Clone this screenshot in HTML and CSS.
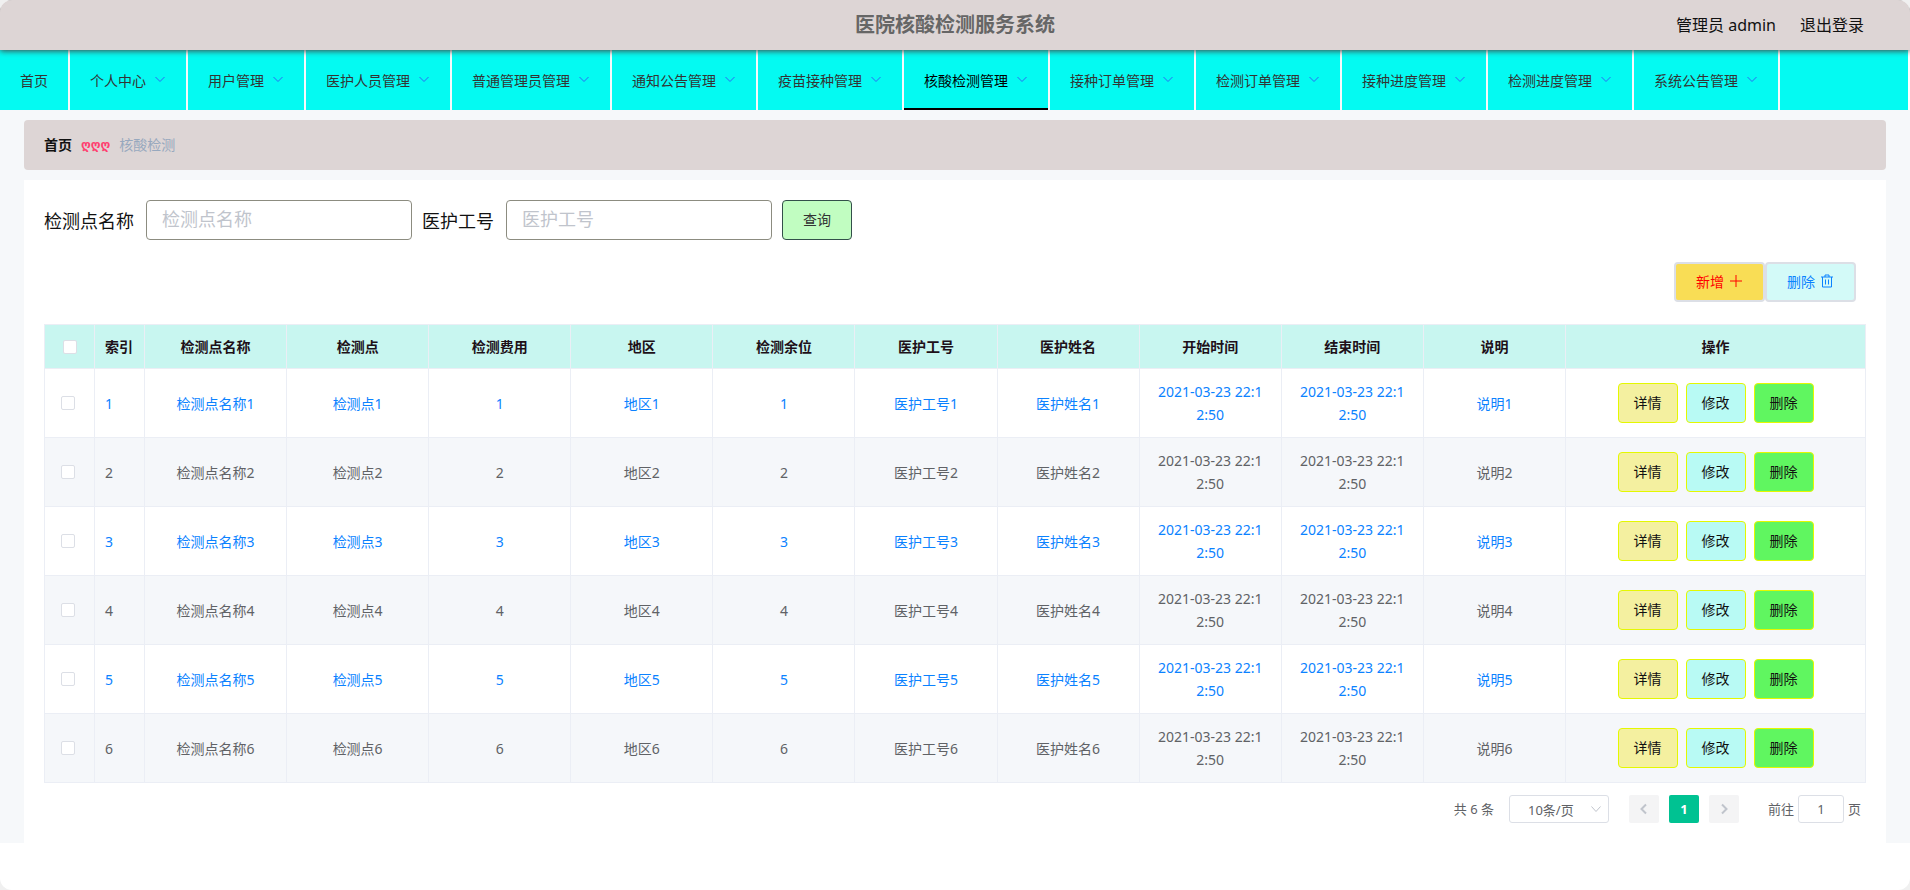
FILE: index.html
```html
<!DOCTYPE html>
<html lang="zh-CN">
<head>
<meta charset="utf-8">
<title>医院核酸检测服务系统</title>
<link rel="stylesheet" href="styles.css">
</head>
<body>
<div class="app">
  <header class="topbar">
    <h1 class="title">医院核酸检测服务系统</h1>
    <div class="account">
      <span>管理员 admin</span>
      <a class="logout" href="#logout">退出登录</a>
    </div>
  </header>
  <nav class="menu" id="menu">
    <a class="menu-item" href="#home">首页</a>
  </nav>
  <main class="main">
    <div class="crumbs">
      <a class="crumb-home" href="#home">首页</a>
      <span class="crumb-sep">ღღღ</span>
      <span class="crumb-current">核酸检测</span>
    </div>
    <section class="panel">
      <form class="search">
        <label class="search-label" for="site">检测点名称</label>
        <input class="search-input" id="site" type="text" placeholder="检测点名称">
        <label class="search-label" for="staff">医护工号</label>
        <input class="search-input" id="staff" type="text" placeholder="医护工号">
        <button class="query" type="button">查询</button>
      </form>
      <div class="tools">
        <button class="tool tool-add" type="button">新增
          <svg class="icon" viewBox="0 0 14 14"><path d="M7 1v12M1 7h12"/></svg>
        </button>
        <button class="tool tool-del" type="button">删除
          <svg class="icon" viewBox="0 0 14 14"><path d="M1 3h12M5 3V1h4v2M2.500 3v10h9V3M5.500 5.500v5M8.500 5.500v5"/></svg>
        </button>
      </div>
      <table class="grid">
        <colgroup>
          <col class="c-small"><col class="c-small">
          <col><col><col><col><col><col><col><col><col><col>
          <col class="c-ops">
        </colgroup>
        <thead>
          <tr>
            <th><input class="check" type="checkbox" aria-label="全选"></th>
            <th class="index">索引</th>
            <th>检测点名称</th><th>检测点</th><th>检测费用</th><th>地区</th><th>检测余位</th>
            <th>医护工号</th><th>医护姓名</th><th>开始时间</th><th>结束时间</th><th>说明</th><th>操作</th>
          </tr>
        </thead>
        <tbody id="rows"></tbody>
      </table>
      <div class="pager">
        <span class="total">共 6 条</span>
        <span class="size">
          <select class="size-select" aria-label="每页条数"><option>10条/页</option></select>
          <svg class="size-arrow" viewBox="0 0 12 12"><path d="M1.500 3.500 6 8.500l4.500-5"/></svg>
        </span>
        <button class="page" type="button" aria-label="上一页" disabled><svg class="page-icon" viewBox="0 0 12 12"><path d="M8 1.500 3.500 6 8 10.500"/></svg></button>
        <button class="page page-on" type="button">1</button>
        <button class="page" type="button" aria-label="下一页" disabled><svg class="page-icon" viewBox="0 0 12 12"><path d="M4 1.500 8.500 6 4 10.500"/></svg></button>
        <label class="jump">前往<input class="jump-input" type="text" value="1">页</label>
      </div>
    </section>
  </main>
</div>
<script src="app.js"></script>
</body>
</html>
```

FILE: app.js
```js
const menus = ['个人中心', '用户管理', '医护人员管理', '普通管理员管理', '通知公告管理', '疫苗接种管理',
  '核酸检测管理', '接种订单管理', '检测订单管理', '接种进度管理', '检测进度管理', '系统公告管理'];
const menu = document.getElementById('menu');
for (const name of menus) {
  const on = name === '核酸检测管理' ? ' menu-on' : '';
  menu.insertAdjacentHTML('beforeend',
    `<a class="menu-item${on}" href="#menu">${name}<svg class="menu-arrow" viewBox="0 0 12 12"><path d="M1.5 3 6 7.5 10.500 3"/></svg></a>`);
}

const time = '2021-03-23 22:12:50';
const rows = document.getElementById('rows');
for (let i = 1; i <= 6; i++) {
  const cells = [`检测点名称${i}`, `检测点${i}`, i, `地区${i}`, i, `医护工号${i}`, `医护姓名${i}`];
  rows.insertAdjacentHTML('beforeend', `<tr>
    <td class="pick"><input class="check" type="checkbox" aria-label="选择第${i}行"></td>
    <td class="index">${i}</td>
    ${cells.map(c => `<td>${c}</td>`).join('')}
    <td class="time">${time}</td><td class="time">${time}</td><td>说明${i}</td>
    <td><div class="ops">
      <button class="op op-view" type="button">详情</button>
      <button class="op op-edit" type="button">修改</button>
      <button class="op op-del" type="button">删除</button>
    </div></td></tr>`);
}
```

FILE: styles.css
```css
* { box-sizing: border-box; }
body {
  margin: 0;
  background: #f0f0f0;
  font-family: "Noto Sans", "Noto Sans CJK SC", sans-serif;
  font-size: 14px;
  color: #606266;
}
button, input, select { font: inherit; color: inherit; margin: 0; }
button { cursor: pointer; }
a { color: inherit; text-decoration: none; }
svg { fill: none; stroke: currentColor; }

.app {
  min-height: 100vh;
  background: #fff;
  border-radius: 12px;
  overflow: hidden;
}

.topbar {
  position: relative;
  display: grid;
  grid-template-columns: 1fr auto 1fr;
  align-items: center;
  height: 50px;
  padding: 0 46px 2px;
  background: #ddd5d5;
  box-shadow: 0 1px 6px #444;
}
.title { grid-column: 2; margin: 0; padding-top: 2px; font-size: 20px; line-height: 30px; color: #666; }
.account {
  display: flex;
  justify-content: flex-end;
  gap: 24px;
  font-size: 16px;
  color: #111;
}

.menu { display: flex; height: 60px; margin-right: 2px; background: #04faf2; }
.menu-item {
  display: flex;
  align-items: center;
  gap: 8px;
  padding: 0 20px;
  border-right: 2px solid #f7f9fb;
  color: #333;
  white-space: nowrap;
}
.menu-arrow { width: 12px; height: 12px; stroke: #2a6af5; }
.menu-on { color: #000; box-shadow: inset 0 -2px #000; }

.main { padding: 10px 24px 0; background: #f6f8fa; }
.crumbs {
  display: flex;
  align-items: center;
  gap: 9px;
  height: 50px;
  padding: 0 20px 2px;
  border-radius: 4px;
  background: #ddd5d5;
}
.crumb-home { font-weight: 700; color: #111; }
.crumb-sep { padding-top: 2px; font-family: "DejaVu Sans", sans-serif; font-size: 12px; font-weight: 700; color: #ff4070; }
.crumb-current { color: #97a8be; }

.panel { margin-top: 10px; padding: 20px; background: #fff; }

.search { display: flex; align-items: center; font-size: 18px; color: #111; }
.search-label { margin-right: 12px; }
.search-input {
  width: 266px;
  height: 40px;
  margin-right: 10px;
  padding: 0 15px 2px;
  border: 1px solid #8c8c80;
  border-radius: 4px;
  background: #fff;
}
.search-input::placeholder { color: #c0c4cc; }
.query {
  width: 70px;
  height: 40px;
  padding: 0 0 2px;
  border: 1px solid #334f4a;
  border-radius: 4px;
  background: #c1fdc1;
  font-size: 14px;
  color: #333;
}

.tools { display: flex; justify-content: flex-end; margin: 22px 10px; }
.tool {
  display: flex;
  align-items: center;
  justify-content: center;
  gap: 5px;
  width: 91px;
  height: 40px;
  padding: 0 0 2px;
  border: 2px solid #dcdfe6;
  border-radius: 4px;
}
.icon { width: 14px; height: 14px; }
.tool-add { background: #f9dd55; color: #f00; }
.tool-del { background: #d3faf8; color: #0b82ff; }

.grid {
  width: 100%;
  table-layout: fixed;
  border-collapse: collapse;
  line-height: 23px;
  text-align: center;
}
.c-small { width: 50px; }
.c-ops { width: 300px; }
.grid th, .grid td { padding: 11px 10px; border: 1px solid #ebeef5; }
.grid th { height: 44px; padding: 10px; background: #c8f6f0; color: #201018; }
.grid td { height: 69px; }
.grid .index { padding-right: 0; text-align: left; }
.grid .pick { padding-right: 14px; }
.grid .time { padding: 11px 14px; word-break: break-all; }
.grid tr:nth-child(odd) td { color: #0b82ff; }
.grid tr:nth-child(even) td { background: #f5f7fa; }
.check {
  display: block;
  appearance: none;
  width: 14px;
  height: 14px;
  margin: 0 auto;
  border: 1px solid #dcdfe6;
  border-radius: 2px;
  background: #fff;
}
.ops { display: flex; justify-content: center; gap: 8px; }
.op {
  width: 60px;
  height: 40px;
  padding: 0 0 2px;
  border: 1px solid #e4f800;
  border-radius: 4px;
  color: #111;
}
.op-view { background: #f4f0a0; }
.op-edit { background: #b8faf4; }
.op-del { background: #60f660; }

.pager {
  display: flex;
  align-items: center;
  justify-content: flex-end;
  gap: 10px;
  margin-top: 12px;
  padding-right: 5px;
  font-size: 13px;
  line-height: 28px;
}
.total { margin-right: 5px; }
.size { position: relative; margin-right: 10px; }
.size-select {
  display: block;
  width: 100px;
  height: 28px;
  padding: 0 18px;
  appearance: none;
  border: 1px solid #dcdfe6;
  border-radius: 3px;
  background: #fff;
}
.size-arrow { position: absolute; top: 8px; right: 7px; width: 12px; height: 12px; stroke: #c0c4cc; }
.page {
  display: flex;
  align-items: center;
  justify-content: center;
  width: 30px;
  height: 28px;
  padding: 0;
  border: 0;
  border-radius: 2px;
  background: #f4f4f5;
  color: #c0c4cc;
}
.page-icon { width: 12px; height: 12px; stroke-width: 2; }
.page-on { background: #00c292; color: #fff; font-weight: 700; }
.jump { display: flex; align-items: center; gap: 4px; margin-left: 19px; }
.jump-input {
  width: 46px;
  height: 28px;
  padding: 0;
  border: 1px solid #dcdfe6;
  border-radius: 3px;
  text-align: center;
}
```
